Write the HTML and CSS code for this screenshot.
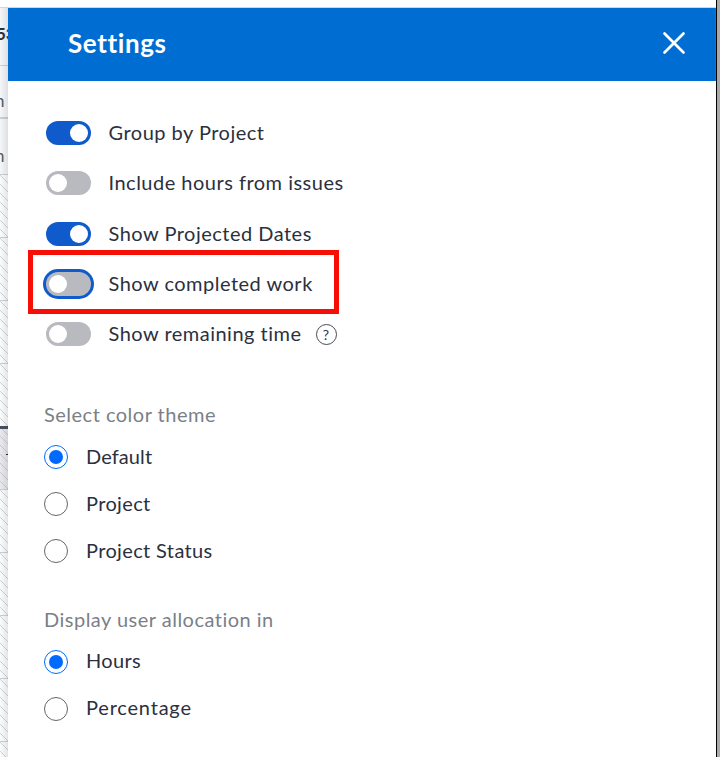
FILE: index.html
```html
<!DOCTYPE html>
<html lang="en">
<head>
<meta charset="utf-8">
<title>Settings</title>
<link rel="stylesheet" href="styles.css">
</head>
<body>
<div class="window">
  <div class="topbar"></div>
  <div class="content">
    <aside class="grid-edge">
      <div class="cell head"><b>53</b></div>
      <div class="cell sub"><span>n</span></div>
      <div class="cell third"><span>n</span></div>
      <div class="cell hatch"></div>
      <div class="cell hatch"></div>
      <div class="cell hatch"></div>
      <div class="cell hatch section-end"></div>
      <div class="cell hatch shaded"><i class="tick"></i></div>
      <div class="cell hatch"></div>
      <div class="cell hatch"></div>
      <div class="cell hatch"></div>
      <div class="cell hatch"></div>
      <div class="cell hatch"></div>
    </aside>
    <main class="panel">
      <header class="header">
        <h1>Settings</h1>
        <svg class="close" viewBox="0 0 24 24"><path d="M2.5 2.5 21.5 21.5M21.5 2.5 2.5 21.5"/></svg>
      </header>
      <section class="toggles">
        <div class="toggle-row"><span class="switch on"></span><span class="label">Group by Project</span></div>
        <div class="toggle-row"><span class="switch"></span><span class="label">Include hours from issues</span></div>
        <div class="toggle-row"><span class="switch on"></span><span class="label">Show Projected Dates</span></div>
        <div class="toggle-row marked"><span class="switch focus"></span><span class="label">Show completed work</span></div>
        <div class="toggle-row"><span class="switch"></span><span class="label">Show remaining time</span><span class="help">?</span></div>
      </section>
      <section class="group">
        <h2>Select color theme</h2>
        <div class="radio-row"><span class="radio checked"></span><span class="label tight">Default</span></div>
        <div class="radio-row"><span class="radio"></span><span class="label mid">Project</span></div>
        <div class="radio-row"><span class="radio"></span><span class="label mid">Project Status</span></div>
      </section>
      <section class="group allocation">
        <h2>Display user allocation in</h2>
        <div class="radio-row"><span class="radio checked"></span><span class="label mid">Hours</span></div>
        <div class="radio-row"><span class="radio"></span><span class="label wide">Percentage</span></div>
      </section>
    </main>
  </div>
</div>
</body>
</html>
```
FILE: styles.css
```css
*, *::before, *::after { box-sizing: border-box; }
body { margin: 0; width: 720px; height: 757px; overflow: hidden; background: #aaa; font-family: Lato, "Liberation Sans", sans-serif; color: #2b303e; }
.window { width: 717px; height: 757px; background: #fff; border-right: 1px solid #000; }
.topbar { height: 8px; border-bottom: 1px solid #d3d7dc; }
.content { display: flex; height: 749px; }
.grid-edge { width: 8px; flex: none; overflow: hidden; position: relative; }
.grid-edge::after { content: ""; position: absolute; inset: 0; background: linear-gradient(90deg, rgba(30,40,60,.01), rgba(30,40,60,.12)); }
.cell { height: 63px; border-bottom: 1px solid #cfd1d8; overflow: hidden; }
.head { height: 58px; background: #f8f9fa; font-size: 17px; line-height: 20px; padding-top: 16px; }
.head b { margin-left: -4px; }
.sub, .third { background: #f8f9fa; font-size: 17px; color: #555b66; line-height: 20px; }
.sub span, .third span { margin-left: -5px; }
.sub { height: 53px; padding-top: 25px; border-bottom-width: 2px; }
.third { height: 56px; padding-top: 27px; }
.hatch { background: repeating-linear-gradient(45deg, #fff 0 5.1px, #d4d5d8 5.1px 6.36px); }
.section-end { border-bottom: 3px solid #484e5f; height: 65px; }
.shaded { height: 61px; background: repeating-linear-gradient(45deg, #ececf0 0 5.1px, #cccdd2 5.1px 6.36px); }
.tick { display: block; width: 2px; height: 1px; margin: 25px 0 0 6px; background: #222; }
.panel { flex: 1; background: #fff; }
.header { height: 73px; background: #006dd2; border-right: 1px solid #1579d6; color: #fff; display: flex; align-items: center; justify-content: space-between; padding: 0 29px 0 60px; }
h1 { margin: 0; font-size: 26px; line-height: 30px; font-weight: 700; letter-spacing: .6px; position: relative; top: -2px; }
.close { width: 24px; height: 24px; fill: none; stroke: #fff; stroke-width: 2.7; stroke-linecap: round; position: relative; top: -2px; }
.toggles { padding: 27px 0 0 38px; }
.toggle-row { height: 50.3px; display: flex; align-items: center; position: relative; }
.switch { width: 45px; height: 24px; border-radius: 12px; background: #b9babf; padding: 3px; display: flex; flex: none; margin-right: 17.5px; }
.switch::before { content: ""; width: 18px; height: 18px; border-radius: 50%; background: #fff; }
.on { background: #0f5bcc; justify-content: flex-end; }
.focus { box-shadow: 0 0 0 3px #0f5bcc; }
.label, h2 { font-size: 20px; line-height: 28px; font-weight: 400; white-space: nowrap; letter-spacing: .49px; }
.label { padding-bottom: 2px; }
.tight { letter-spacing: .1px; padding-bottom: 3px; }
.mid { letter-spacing: .36px; }
.wide { letter-spacing: .8px; }
.marked::after { content: ""; position: absolute; left: -18px; top: -9px; width: 311px; height: 64px; border: 5px solid #f50f05; }
.help { width: 21px; height: 21px; border: 1.3px solid #454a56; border-radius: 50%; display: grid; place-items: center; font-size: 14px; line-height: 1; margin: 1px 0 0 14px; }
.group { padding-left: 36px; margin-top: 41px; }
.group + .group { margin-top: 30px; }
h2 { margin: 0 0 5px; color: #7b7f87; }
.allocation h2 { margin-bottom: 6px; }
.allocation .label { padding-bottom: 4px; }
.radio-row { display: flex; align-items: center; height: 47.1px; }
.radio { width: 24px; height: 24px; border: 1.5px solid #666; border-radius: 50%; display: grid; place-items: center; margin-right: 18px; }
.checked { border: 1.5px solid #006aff; }
.checked::before { content: ""; width: 14px; height: 14px; border-radius: 50%; background: #006aff; }
```
